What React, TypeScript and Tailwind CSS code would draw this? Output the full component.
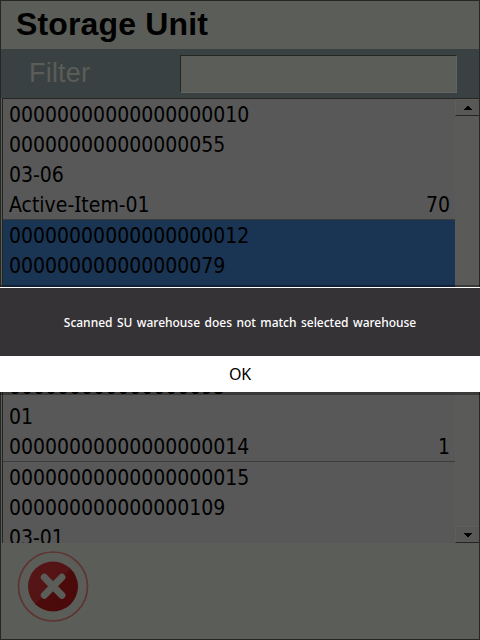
type Entry = { lines: string[]; qty: string; selected?: boolean };

const entries: Entry[] = [
  { lines: ['00000000000000000010', '000000000000000055', '03-06', 'Active-Item-01'], qty: '70' },
  { lines: ['00000000000000000012', '000000000000000079', '', ''], qty: '', selected: true },
  { lines: ['', '000000000000000093', '01', '00000000000000000014'], qty: '1' },
  { lines: ['00000000000000000015', '000000000000000109', '03-01', ''], qty: '' },
];

function Label({ text }: { text: string }) {
  return (
    <span>
      {text.split(/(I)/).map((part, i) =>
        part === 'I' ? (
          <span key={i} className="font-['Noto_Sans',sans-serif] leading-none">
            I
          </span>
        ) : (
          part
        ),
      )}
    </span>
  );
}

function EntryRow({ entry }: { entry: Entry }) {
  return (
    <li className={`h-[121px] shrink-0 border-b border-[#3c3c3c] pr-[5px] pl-1.5 ${entry.selected ? 'bg-[#1a3453]' : ''}`}>
      {entry.lines.map((line, i) => (
        <div key={i} className="flex h-[30px] justify-between whitespace-pre">
          <Label text={line} />
          {i === 3 && <span>{entry.qty}</span>}
        </div>
      ))}
    </li>
  );
}

function ScrollButton({ down = false }: { down?: boolean }) {
  return (
    <button className="flex h-[17px] w-full shrink-0 items-center justify-center border-t border-b border-l border-t-[#5e5f5b] border-b-[#252622] border-l-[#5e5f5b] bg-[#585956]">
      <svg width="8" height="4" viewBox="0 0 8 4" shapeRendering="crispEdges" className={down ? 'rotate-180' : ''}>
        <path d="M3 0h2v1h1v1h1v1h1v1H0V3h1V2h1V1h1z" fill="#000" />
      </svg>
    </button>
  );
}

export default function App() {
  return (
    <div className="relative h-[640px] w-[480px] overflow-hidden">
      <div className="flex h-full flex-col border border-[#262724] bg-[#5b5d58] text-black">
        <h1 className="h-12 shrink-0 pl-[15px] font-['Liberation_Sans',Arial,sans-serif] text-[32px] leading-[46px] font-bold tracking-[0.15px]">
          Storage Unit
        </h1>
        <div className="flex h-[49px] shrink-0 items-start justify-between bg-[#3a4142] pr-[22px] pl-7">
          <label htmlFor="filter" className="font-['Liberation_Sans',Arial,sans-serif] text-[27px] leading-[48px] tracking-[0.2px] text-[#5b5d58]">
            Filter
          </label>
          <input
            id="filter"
            className="mt-[6px] h-[38px] w-[277px] border border-t-[#252622] border-r-[#62645f] border-b-[#62645f] border-l-[#252622] bg-[#5b5d58] outline-none"
          />
        </div>
        <div className="ml-px flex h-[445px] shrink-0 overflow-hidden border-t border-l border-[#252622] bg-[#585858]">
          <ul className="flex w-[452px] flex-col overflow-hidden font-['DejaVu_Sans_Condensed','DejaVu_Sans',sans-serif] text-[21px] leading-[32px] [font-stretch:condensed]">
            {entries.map((entry, i) => (
              <EntryRow key={i} entry={entry} />
            ))}
          </ul>
          <div className="flex min-w-0 flex-1 flex-col justify-between bg-[#5a5a59]">
            <ScrollButton />
            <ScrollButton down />
          </div>
        </div>
        <footer className="flex flex-1 items-start pt-2 pl-4">
          <button aria-label="Close">
            <svg width="72" height="72" viewBox="0 0 72 72">
              <defs>
                <linearGradient id="red" x1="0" y1="0" x2="1" y2="1">
                  <stop offset="0" stopColor="#561517" />
                  <stop offset="0.48" stopColor="#541315" />
                  <stop offset="0.52" stopColor="#4c0b0b" />
                  <stop offset="1" stopColor="#4b0909" />
                </linearGradient>
              </defs>
              <circle cx="36" cy="35.5" r="34.5" fill="none" stroke="#5e3432" strokeWidth="1.7" />
              <circle cx="36" cy="35.5" r="25" fill="url(#red)" />
              <path d="M27.3 26.3l17.6 18M44.9 26.3l-17.6 18" stroke="#5b5d58" strokeWidth="7" strokeLinecap="round" />
            </svg>
          </button>
        </footer>
      </div>
      <div
        role="dialog"
        className="absolute inset-x-0 top-[285px] border-t-2 border-b-3 border-black/35 font-['DejaVu_Sans_Condensed','DejaVu_Sans',sans-serif] text-black [font-stretch:condensed]"
      >
        <p className="h-[69px] border-t border-white bg-[#363337] text-center font-['Noto_Sans',sans-serif] text-[12px] leading-[69px] font-medium tracking-[-0.02px] [word-spacing:1.4px] whitespace-nowrap text-white">
          Scanned SU warehouse does not match selected warehouse
        </p>
        <button className="block h-9 w-full bg-white font-['Noto_Sans',sans-serif] text-[16px] leading-9 tracking-[-0.2px]">OK</button>
      </div>
    </div>
  );
}
